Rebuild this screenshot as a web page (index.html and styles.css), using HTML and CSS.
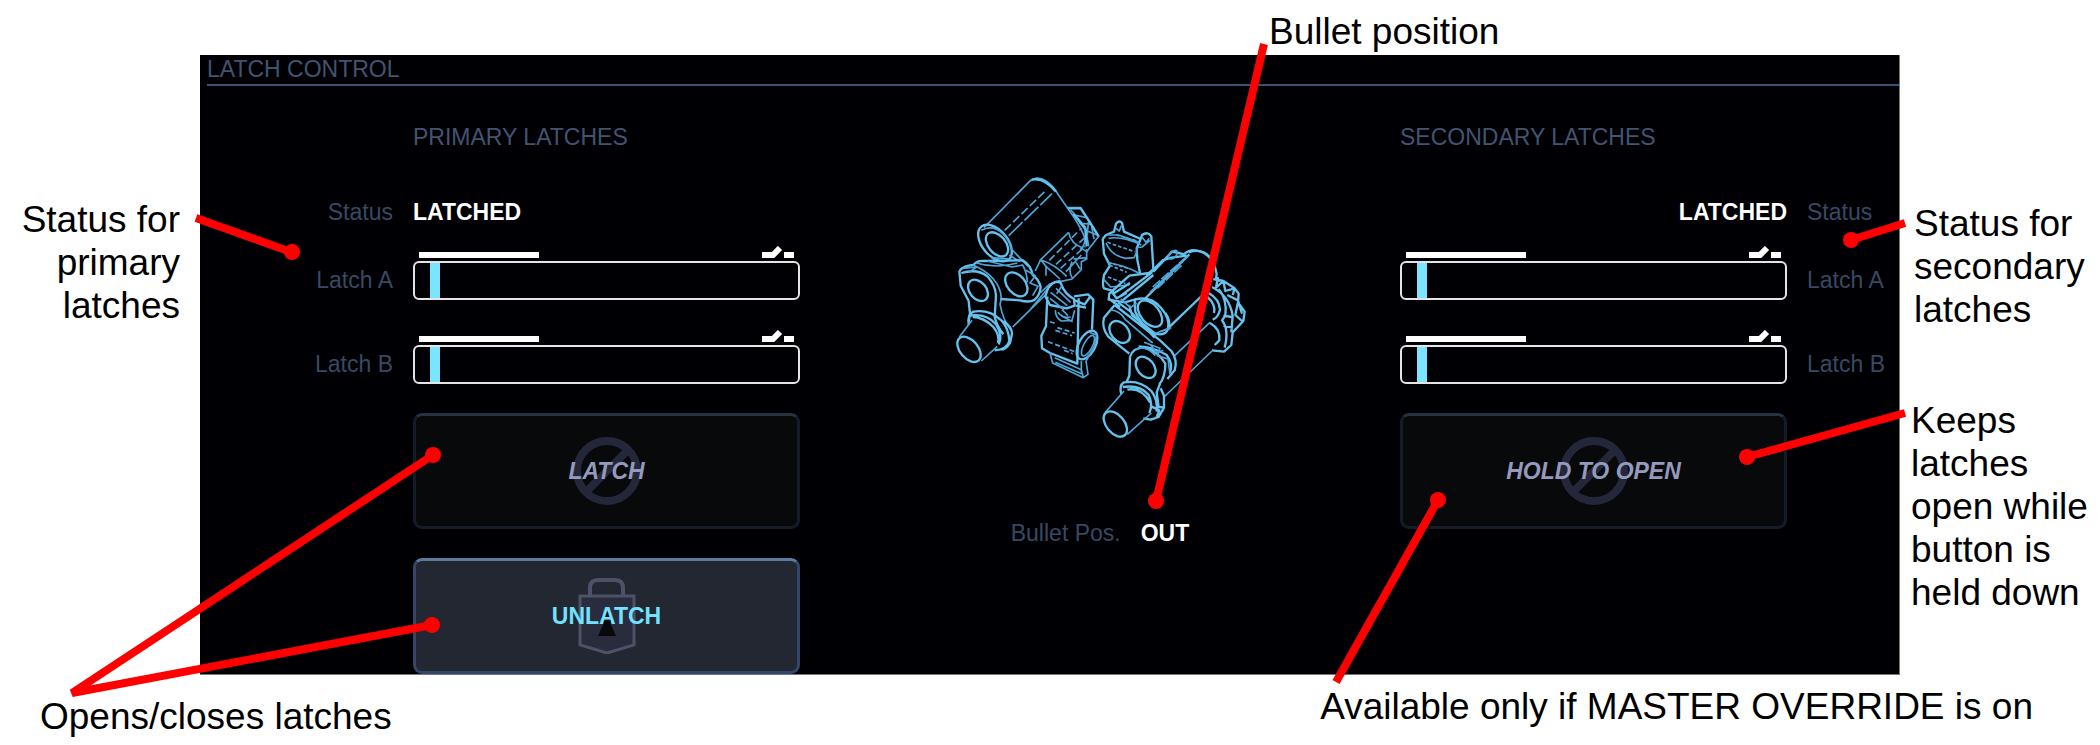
FILE: index.html
```html
<!DOCTYPE html>
<html lang="en">
<head>
<meta charset="utf-8">
<title>Latch Control</title>
<link rel="stylesheet" href="styles.css">
</head>
<body>
<svg class="symbols" aria-hidden="true">
  <symbol id="open-mark" viewBox="0 0 32 12">
    <path d="M0 9H11L18 2" fill="none" stroke="#fff" stroke-width="6"/>
    <path d="M22 9H32" fill="none" stroke="#fff" stroke-width="6"/>
  </symbol>
  <symbol id="ban" viewBox="0 0 70 70">
    <g fill="none" stroke="#242739" stroke-width="8">
      <circle cx="35" cy="35" r="30"/>
      <path d="M14 56L56 14"/>
    </g>
  </symbol>
  <symbol id="lock" viewBox="0 0 58 76">
    <path d="M2 18H56V67L29 75L2 67Z" fill="#292c3d" stroke="#4d5268" stroke-width="3"/>
    <path d="M12 18V10Q12 2 20 2H37Q45 2 45 10V18" fill="none" stroke="#4d5268" stroke-width="4"/>
    <path d="M29 38L38 58H20Z" fill="#08090c"/>
    <circle cx="29" cy="40" r="6" fill="#08090c"/>
  </symbol>
</svg>
<main class="sheet">
  <p class="note note-top">Bullet position</p>

  <aside class="side side-left">
    <p class="note">Status for primary latches</p>
  </aside>

  <section class="panel">
    <h1 class="panel-title">LATCH CONTROL</h1>
    <div class="panel-body">
      <section class="bank bank-primary">
        <h2 class="bank-title">PRIMARY LATCHES</h2>
        <span class="label status">Status</span>
        <span class="value status">LATCHED</span>
        <span class="label gauge-label" id="pa">Latch A</span>
        <div class="gauge" role="meter" aria-labelledby="pa" aria-valuenow="5">
          <div class="marks"><i class="closed-mark"></i><svg class="open-mark"><use href="#open-mark"/></svg></div>
          <div class="track"><i class="needle"></i></div>
        </div>
        <span class="label gauge-label second" id="pb">Latch B</span>
        <div class="gauge second" role="meter" aria-labelledby="pb" aria-valuenow="5">
          <div class="marks"><i class="closed-mark"></i><svg class="open-mark"><use href="#open-mark"/></svg></div>
          <div class="track"><i class="needle"></i></div>
        </div>
        <button class="action" type="button" disabled><svg class="ban"><use href="#ban"/></svg><span>LATCH</span></button>
        <button class="action" type="button"><svg class="lock"><use href="#lock"/></svg><span>UNLATCH</span></button>
      </section>

      <section class="center">
        <svg class="art" viewBox="0 0 960 870" role="img" aria-label="Latch mechanism">
          <g class="wire">
            <!-- left cylinder and its end face -->
            <path d="M132 206L268 68Q290 48 318 66Q342 82 354 106L382 146Q418 196 432 230Q440 256 420 272" />
            <path d="M276 62Q312 54 348 98" class="bold"/>
            <ellipse cx="165" cy="252" rx="64" ry="38" transform="rotate(50 165 252)" class="bold"/>
            <ellipse cx="171" cy="256" rx="42" ry="26" transform="rotate(50 171 256)" class="bold"/>
            <path d="M124 214Q158 196 186 222Q208 242 214 270L264 322M208 288L240 308"/>
            <path d="M194 214L320 92" stroke-dasharray="26 9"/>
            <path d="M206 230L336 104" stroke-dasharray="58 8"/>
            <path d="M380 146H422L446 184L476 232L440 278L424 268M392 152L436 204L446 262M404 168L440 176M418 192L454 196L462 240M436 214L472 228M446 184L440 240"/>
            <path d="M384 148H422L446 184L476 232M400 164L436 210L440 262" class="bold"/>
            <!-- inner pin -->
            <path d="M386 220L302 302L318 322L360 360M386 220Q392 254 430 268M306 304Q346 318 380 352M318 322V350"/>
            <path d="M328 304L424 208M348 316L432 238M362 328L436 262" stroke-dasharray="22 10"/>
            <path d="M302 302L286 336M440 270V300L424 308V332L396 360L350 370M396 308Q384 336 396 356M424 288L378 338M408 310L420 330M400 300L440 296"/>
            <!-- left link arms -->
            <path d="M58 336Q70 320 100 318Q112 304 132 306L248 304Q272 318 278 348Q296 360 302 384Q300 408 284 422Q268 432 240 424L180 420" class="bold"/>
            <path d="M58 336L62 380L86 426L90 464L86 488M64 342Q112 328 142 352Q166 378 168 410L164 474Q170 500 190 526" class="bold"/>
            <path d="M100 318Q142 338 160 360Q182 384 184 418L180 436Q190 486 212 512M108 312Q170 330 232 312M142 306L216 324L248 318Q262 344 262 370M258 334L286 350L270 372L294 382L278 410M70 328L110 324L86 340M154 296L214 300"/>
            <ellipse cx="114" cy="394" rx="36" ry="25" transform="rotate(50 114 394)" class="bold"/>
            <ellipse cx="229" cy="376" rx="41" ry="27" transform="rotate(50 229 376)" class="bold"/>
            <path d="M272 450L324 388M218 504L316 408M300 402L328 376L362 364"/>
            <!-- left lower barrel -->
            <path d="M86 498Q82 466 100 458Q148 450 184 484Q206 508 208 546Q200 572 164 574M88 470Q140 462 168 496Q190 530 176 556M98 474Q130 474 160 504Q180 528 174 552M190 486Q216 504 216 524L210 552Q196 572 184 572" class="bold"/>
            <path d="M58 534L96 484M124 606L172 562"/>
            <ellipse cx="87" cy="571" rx="44" ry="27" transform="rotate(50 87 571)" class="bold"/>
            <!-- centre bracket -->
            <path d="M324 388Q344 360 362 372Q374 406 402 420L404 440L380 448L330 438L316 412ZM322 412L318 502L304 530L306 568L330 582L412 614L416 418M402 412L444 406L460 422L456 512M404 424L434 436L450 414M408 440L438 446" class="bold"/>
            <path d="M332 400L382 440M348 388L392 430M330 418L372 452M366 380L350 404M346 454Q346 476 364 486L396 484L404 454M354 460Q368 480 392 474M364 470L398 488M366 452L384 470"/>
            <path d="M330 488L348 494M352 506L404 522M324 548L404 578M346 514L396 530M372 574L398 584" stroke-dasharray="15 8"/>
            <path d="M330 582L338 612L430 656L444 646L438 606M344 596L424 632L430 656M424 606V640M346 610L428 646"/>
            <ellipse cx="441" cy="558" rx="47" ry="25" transform="rotate(118 441 558)" class="bold"/>
            <ellipse cx="444" cy="560" rx="34" ry="13" transform="rotate(118 444 560)"/>
            <path d="M448 520L470 528L462 564L438 606"/>
          </g>
          <g class="wire">
            <!-- upper right bracket -->
            <path d="M488 240L498 228L522 218L528 194Q538 182 546 192L552 218L602 240L606 228Q624 216 634 232L640 330L620 348M488 240L492 284L510 320L492 348Q486 380 492 388L514 394L522 398M602 240L590 268L592 302L600 342" class="bold"/>
            <path d="M498 252Q514 290 556 298L582 296Q594 276 590 266L606 264L630 244M506 238Q544 230 604 258M528 208L538 216L544 200M606 234L618 250L628 238M500 228L536 228L598 250"/>
            <path d="M502 250L584 278M528 228L594 246M504 310L570 330M504 354L556 374M508 318L560 340" stroke-dasharray="11 6"/>
            <path d="M510 312Q556 320 596 342M492 362L512 384L568 378"/>
            <!-- right cylinder -->
            <path d="M640 338L696 278L716 282L732 286Q752 266 782 278Q820 290 830 344L828 358" class="bold"/>
            <path d="M620 352L668 304L694 296L740 290M614 420L748 286M746 280Q792 264 818 306" class="bold"/>
            <ellipse cx="699" cy="287" rx="16" ry="9" transform="rotate(-45 699 287)"/>
            <path d="M638 384L732 300M652 388L728 316M630 400L744 292" stroke-dasharray="30 5"/>
            <path d="M568 350L628 342L648 330M568 350L508 404L506 422L554 430L590 420M520 404L570 372M538 414L636 340M548 424L640 348M516 400L530 418L560 402M508 420L540 444" class="bold"/>
            <ellipse cx="630" cy="464" rx="46" ry="28" transform="rotate(50 630 464)" class="bold"/>
            <path d="M584 422Q632 408 664 448Q690 478 684 510Q676 532 644 524Q606 504 586 458ZM676 462Q694 488 686 512" class="bold"/>
            <path d="M686 506L788 408" class="bold"/>
            <path d="M704 590L810 490M660 518L694 506M672 714L816 576"/>
            <path d="M820 360L850 366L884 388L896 404L894 430L914 458L910 486L878 520L874 558L852 578L816 574M834 354L828 386L850 366L856 396L884 388L878 408M816 384Q868 410 878 470L874 520M806 402Q838 420 840 452Q834 476 818 482M810 492Q842 510 838 544L824 558M802 414Q828 436 822 462M836 390Q862 420 856 470L846 484Q868 512 854 566M862 408L894 424L906 464M894 430L886 468L906 486M850 470L876 474M850 500L878 506" class="bold"/>
            <!-- right link arms -->
            <path d="M524 438L492 476Q484 506 504 532L548 568L568 584M524 438L660 544L694 576Q714 604 704 634L682 660M534 430L572 458L644 536M568 440L576 468L650 528" class="bold"/>
            <path d="M510 452Q542 456 556 482L638 552M542 420L572 446L590 432M644 524L690 506"/>
            <ellipse cx="539" cy="519" rx="37" ry="26" transform="rotate(50 539 519)" class="bold"/>
            <ellipse cx="617" cy="625" rx="36" ry="25" transform="rotate(50 617 625)" class="bold"/>
            <path d="M570 594Q578 566 612 566Q656 578 676 614Q676 654 658 676M570 594L568 650L560 668M596 562Q640 564 680 588Q700 614 690 642" class="bold"/>
            <path d="M612 550L660 568L652 590L684 600L690 646M586 572Q616 556 646 590M632 558L650 582L670 574"/>
            <!-- right lower barrel -->
            <path d="M544 706Q536 680 552 670Q600 662 634 696Q654 722 650 758M548 684Q600 676 626 708Q640 736 628 762M562 692Q604 684 630 730M660 674L650 700L656 744L672 746L672 710L662 688M672 746L656 774L632 782L610 778M634 742L658 754L650 774" class="bold"/>
            <path d="M496 760L552 696M562 826L634 762"/>
            <ellipse cx="526" cy="795" rx="44" ry="27" transform="rotate(50 526 795)" class="bold"/>
          </g>
        </svg>
        <p class="bullet"><span class="label">Bullet Pos.</span><span class="value">OUT</span></p>
      </section>

      <section class="bank bank-secondary">
        <h2 class="bank-title">SECONDARY LATCHES</h2>
        <span class="value status">LATCHED</span>
        <span class="label status">Status</span>
        <div class="gauge" role="meter" aria-labelledby="sa" aria-valuenow="5">
          <div class="marks"><i class="closed-mark"></i><svg class="open-mark"><use href="#open-mark"/></svg></div>
          <div class="track"><i class="needle"></i></div>
        </div>
        <span class="label gauge-label" id="sa">Latch A</span>
        <div class="gauge second" role="meter" aria-labelledby="sb" aria-valuenow="5">
          <div class="marks"><i class="closed-mark"></i><svg class="open-mark"><use href="#open-mark"/></svg></div>
          <div class="track"><i class="needle"></i></div>
        </div>
        <span class="label gauge-label second" id="sb">Latch B</span>
        <button class="action" type="button" disabled><svg class="ban"><use href="#ban"/></svg><span>HOLD TO OPEN</span></button>
      </section>
    </div>
  </section>

  <aside class="side side-right">
    <p class="note note-status">Status for secondary latches</p>
    <p class="note">Keeps latches open while button is held down</p>
  </aside>

  <footer class="footer">
    <p class="note note-open">Opens/closes latches</p>
    <p class="note">Available only if MASTER OVERRIDE is on</p>
  </footer>

  <svg class="leaders" viewBox="0 0 2100 745" preserveAspectRatio="none" aria-hidden="true">
    <g stroke="#f00" stroke-width="8" fill="none">
      <path d="M196 218L291 252"/>
      <path d="M1264 44L1156 501"/>
      <path d="M1905 223L1851 240"/>
      <path d="M1905 413L1747 457"/>
      <path d="M1336 682L1438 500"/>
      <path d="M433 455L72 693L432 625"/>
    </g>
    <g fill="#f00">
      <circle cx="292" cy="252" r="8"/>
      <circle cx="1156" cy="501" r="8"/>
      <circle cx="1851" cy="240" r="8"/>
      <circle cx="1747" cy="457" r="8"/>
      <circle cx="1438" cy="500" r="8"/>
      <circle cx="433" cy="455" r="8"/>
      <circle cx="432" cy="625" r="8"/>
    </g>
  </svg>
</main>
</body>
</html>
```
FILE: styles.css
```css
* { box-sizing: border-box; }

body {
  margin: 0;
  background: #fff;
  color: #000;
  font-family: "Liberation Sans", Arial, sans-serif;
}

h1, h2, p { margin: 0; font-weight: 400; }

.symbols { position: absolute; width: 0; height: 0; }

.sheet {
  position: relative;
  display: grid;
  grid-template-columns: 200px 1fr 200px;
}

.note { font-size: 37px; line-height: 43px; }

.note-top {
  grid-column: 1 / 4;
  display: grid;
  padding: 10px 0 2px 1270px;
  padding-left: calc(50% + 219px);
}

.side { padding: 143px 20px 0 12px; }
.side-left { grid-column: 1; text-align: right; }
.side-right { padding: 147px 0 0 11px; }
.note-status { padding: 0 12px 0 3px; margin-bottom: 68px; }

.panel {
  background: #000004;
  border-right: 1px solid #777;
  border-bottom: 1px solid #777;
  color: #42546f;
  font-size: 23px;
  line-height: 28px;
}

.panel-title {
  margin-left: 7px;
  padding-bottom: 1px;
  border-bottom: 2px solid #3a5372;
  font-size: 23px;
}

.panel-body {
  display: flex;
  justify-content: space-between;
}

.bank {
  display: grid;
  column-gap: 20px;
  align-content: start;
  padding-top: 37px;
}

.bank-primary { grid-template-columns: 193px 387px; }
.bank-secondary { grid-template-columns: 387px 92px; }
.bank-title { grid-column: 1 / 3; font-size: 23px; }
.bank-primary .bank-title, .bank-primary .action { grid-column: 2; }
.bank-primary .label { text-align: right; }
.bank-secondary .value { text-align: right; }

.label { color: #384962; }
.value { color: #fff; font-weight: 700; }
.status { margin-top: 47px; }

.gauge { margin-top: 20px; }
.gauge.second { margin-top: 30px; }
.gauge-label { align-self: end; line-height: 39px; }

.marks {
  display: flex;
  justify-content: space-between;
  align-items: flex-end;
  height: 12px;
  margin: 0 6px 3px;
}

.closed-mark { width: 120px; height: 6px; background: #fff; }
.open-mark { width: 32px; height: 12px; }

.track {
  height: 39px;
  padding-left: 15px;
  border: 2px solid #e4e4e4;
  border-radius: 6px;
}

.needle { display: block; width: 10px; height: 100%; background: #7be4ff; }

.action {
  display: grid;
  place-items: center;
  height: 116px;
  margin-top: 29px;
  padding: 0;
  border: 3px solid #33456a;
  border-top-color: #587b9e;
  border-radius: 9px;
  background: #222731;
  color: #73e1ff;
  font: 700 23px/28px "Liberation Sans", Arial, sans-serif;
}

.action > * { grid-area: 1 / 1; }

.action:disabled {
  border-color: #151c27;
  border-top-color: #263442;
  background: #08090a;
  color: #9599bd;
  font-style: italic;
}

.ban { width: 70px; height: 70px; }
.lock { width: 58px; height: 76px; }

.center {
  display: flex;
  flex-direction: column;
  align-items: center;
  padding-top: 73px;
}

.art { width: 320px; height: 290px; }

.wire { fill: none; stroke: #4fa5d6; stroke-width: 5; stroke-linejoin: round; }
.bold { stroke: #66c2ec; stroke-width: 7; }

.bullet { display: flex; gap: 20px; margin-top: 70px; }

.footer {
  grid-column: 1 / 4;
  display: flex;
  justify-content: space-between;
  align-items: flex-start;
  padding: 10px 67px 0 40px;
}

.note-open { padding-top: 10px; }

.leaders {
  position: absolute;
  inset: 0;
  width: 100%;
  height: 745px;
  pointer-events: none;
}
```
